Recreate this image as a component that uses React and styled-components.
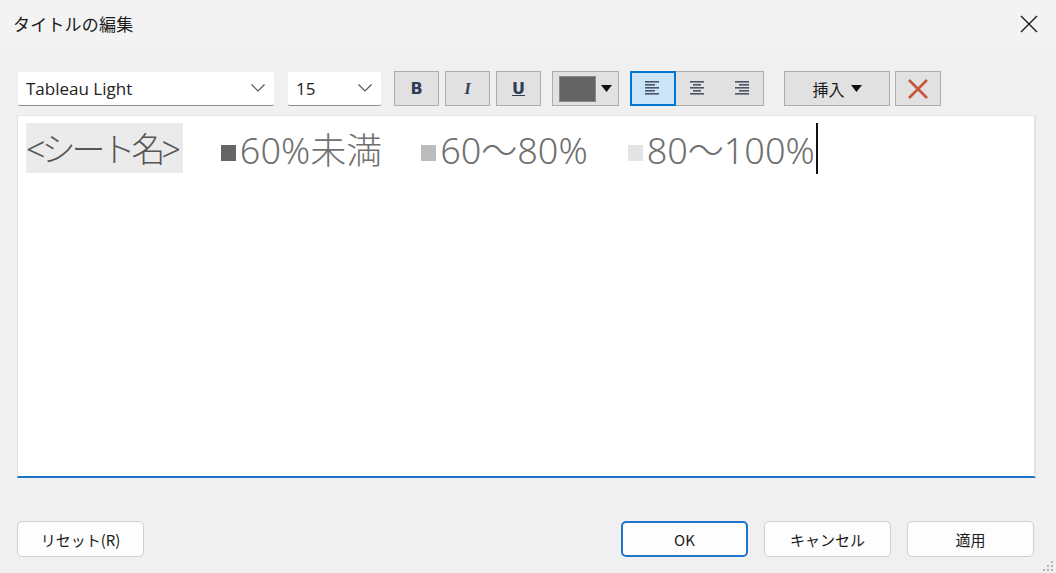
import styled, { createGlobalStyle } from "styled-components";

const GlobalStyle = createGlobalStyle`
  html, body {
    margin: 0;
    padding: 0;
    background: #f0f0f0;
  }
  body {
    font-family: "Noto Sans", "Noto Sans CJK JP", sans-serif;
  }
`;

const Window = styled.div`
  width: 1056px;
  height: 573px;
  display: flex;
  flex-direction: column;
  background: #f0f0f0;
  position: relative;
  overflow: hidden;
`;

const TitleBar = styled.div`
  height: 50px;
  flex: none;
  display: flex;
  align-items: center;
  justify-content: space-between;
  padding: 0 14px 2px 13px;
  box-sizing: border-box;
  background: #f3f3f3;
  border-bottom: 1px solid #ececec;
`;

const Title = styled.div`
  font-family: "Noto Sans CJK JP", sans-serif;
  font-size: 17px;
  color: #1b1b1b;
  letter-spacing: 0.2px;
`;

const CloseButton = styled.div`
  width: 26px;
  height: 26px;
  display: flex;
  align-items: center;
  justify-content: center;
`;

const Body = styled.div`
  flex: 1;
  display: flex;
  flex-direction: column;
  padding: 21px 20px 16px 17px;
`;

const Toolbar = styled.div`
  display: flex;
  align-items: center;
  height: 35px;
`;

const Select = styled.div`
  width: ${(p) => p.$w}px;
  height: 34px;
  margin-left: ${(p) => p.$ml || 0}px;
  box-sizing: border-box;
  background: #fff;
  border-bottom: 1px solid #8f8f8f;
  border-radius: 2px;
  display: flex;
  align-items: center;
  justify-content: space-between;
  padding: 0 8px 0 8px;
  font-family: "Open Sans", sans-serif;
  font-size: 17px;
  color: #222;
`;

const ToolButton = styled.div`
  width: ${(p) => p.$w || 45}px;
  height: 35px;
  margin-left: ${(p) => p.$ml || 0}px;
  box-sizing: border-box;
  background: #e1e1e1;
  border: 1px solid #adadad;
  display: flex;
  align-items: center;
  justify-content: center;
  font-family: "DejaVu Sans", sans-serif;
  font-size: 16px;
  font-weight: bold;
  color: #2f3d55;
`;

const AlignGroup = styled.div`
  display: flex;
  margin-left: 11px;
  border: 1px solid #adadad;
  background: #e1e1e1;
  height: 35px;
  box-sizing: border-box;
`;

const AlignButton = styled.div`
  width: 44px;
  height: 100%;
  box-sizing: border-box;
  display: flex;
  align-items: center;
  justify-content: center;
  background: ${(p) => (p.$active ? "#cce4f7" : "transparent")};
  outline: ${(p) => (p.$active ? "2px solid #0078d4" : "none")};
  outline-offset: -1px;
`;

const Swatch = styled.div`
  width: 37px;
  height: 26px;
  box-sizing: border-box;
  background: #646464;
  border: 1px solid #888;
`;

const InsertLabel = styled.span`
  font-family: "Noto Sans CJK JP", sans-serif;
  font-weight: normal;
  font-size: 16px;
  color: #1c1c1c;
  margin-right: 6px;
`;

const Editor = styled.div`
  margin-top: 9px;
  height: 363px;
  box-sizing: border-box;
  background: #fff;
  border-top: 1px solid #e6e6e6;
  border-left: 1px solid #dedede;
  border-right: 2px solid #dfe5ec;
  border-bottom: 2px solid #1c72c4;
  padding: 7px 0 0 8px;
`;

const Line = styled.div`
  display: flex;
  align-items: center;
  height: 50px;
  font-family: "Noto Sans", "Noto Sans CJK JP", sans-serif;
  font-size: 36px;
  font-weight: 300;
  color: #707070;
`;

const Field = styled.span`
  background: #ebebeb;
  color: #565656;
  height: 50px;
  display: flex;
  align-items: center;
  padding: 0 6px 2px 0;
  box-sizing: border-box;
  font-size: 34px;
  letter-spacing: -4px;
`;

const Legend = styled.span`
  display: flex;
  align-items: center;
  margin-left: ${(p) => p.$ml}px;
`;

const Square = styled.span`
  width: 15px;
  height: 16px;
  margin-top: 9px;
  margin-right: 4px;
  background: ${(p) => p.$c};
`;

const Caret = styled.span`
  width: 2px;
  height: 51px;
  background: #111;
  margin-left: 1px;
`;

const Footer = styled.div`
  margin-top: auto;
  display: flex;
  align-items: center;
  gap: 16px;
  padding-right: 2px;
`;

const DialogButton = styled.div`
  width: 127px;
  height: 36px;
  box-sizing: border-box;
  background: #fdfdfd;
  border: ${(p) => (p.$primary ? "2px solid #1f74c9" : "1px solid #cfcfcf")};
  border-radius: 5px;
  display: flex;
  align-items: center;
  justify-content: center;
  font-family: "Noto Sans CJK JP", sans-serif;
  font-size: 15px;
  color: #1b1b1b;
  margin-left: ${(p) => (p.$push ? "auto" : "0")};
`;

const Grip = styled.svg`
  position: absolute;
  right: 2px;
  bottom: 1px;
`;

const Chevron = () => (
  <svg width="16" height="10" viewBox="0 0 16 10">
    <path d="M1.5 1.5 L8 8 L14.5 1.5" fill="none" stroke="#555" strokeWidth="1.2" />
  </svg>
);

const Caret6 = () => (
  <svg width="11" height="7" viewBox="0 0 11 7">
    <path d="M0 0 H11 L5.5 7 Z" fill="#111" />
  </svg>
);

const AlignIcon = ({ mode }) => {
  const rows = [
    [14, 14, 14],
    [10, 14, 8],
    [14, 14, 14],
    [10, 14, 8],
    [14, 14, 14],
  ];
  return (
    <svg width="18" height="15" viewBox="0 0 18 15">
      {rows.map((r, i) => {
        const w = mode === "left" ? r[0] : mode === "center" ? r[1] - (i % 2 ? 6 : 0) : r[2] + (i % 2 ? 2 : 0);
        const x = mode === "left" ? 1 : mode === "center" ? (18 - w) / 2 : 17 - w;
        return <rect key={i} x={x} y={i * 3} width={w} height="1.6" fill="#4a5668" />;
      })}
    </svg>
  );
};

export default function App() {
  return (
    <>
      <GlobalStyle />
      <Window>
        <TitleBar>
          <Title>タイトルの編集</Title>
          <CloseButton>
            <svg width="20" height="20" viewBox="0 0 20 20">
              <path d="M2 2 L18 18 M18 2 L2 18" stroke="#1a1a1a" strokeWidth="1.4" />
            </svg>
          </CloseButton>
        </TitleBar>
        <Body>
          <Toolbar>
            <Select $w={256} $ml={1}>
              <span>Tableau Light</span>
              <Chevron />
            </Select>
            <Select $w={93} $ml={14}>
              <span>15</span>
              <Chevron />
            </Select>
            <ToolButton $ml={13}>B</ToolButton>
            <ToolButton $ml={6} style={{ fontStyle: "italic", fontFamily: "Liberation Serif" }}>
              I
            </ToolButton>
            <ToolButton $ml={6} style={{ textDecoration: "underline" }}>
              U
            </ToolButton>
            <ToolButton $w={67} $ml={11} style={{ justifyContent: "flex-start", paddingLeft: 6 }}>
              <Swatch />
              <span style={{ marginLeft: 5, display: "flex" }}>
                <Caret6 />
              </span>
            </ToolButton>
            <AlignGroup>
              <AlignButton $active>
                <AlignIcon mode="left" />
              </AlignButton>
              <AlignButton>
                <AlignIcon mode="center" />
              </AlignButton>
              <AlignButton>
                <AlignIcon mode="right" />
              </AlignButton>
            </AlignGroup>
            <ToolButton $w={106} $ml={20}>
              <InsertLabel>挿入</InsertLabel>
              <Caret6 />
            </ToolButton>
            <ToolButton $w={46} $ml={5}>
              <svg width="22" height="22" viewBox="0 0 22 22">
                <path d="M2 2 L20 20 M20 2 L2 20" stroke="#c8553b" strokeWidth="2.6" />
              </svg>
            </ToolButton>
          </Toolbar>
          <Editor>
            <Line>
              <Field>&lt;シート名&gt;</Field>
              <Legend $ml={38}>
                <Square $c="#666666" />
                60%未満
              </Legend>
              <Legend $ml={39}>
                <Square $c="#bcbcbc" />
                60～80%
              </Legend>
              <Legend $ml={40}>
                <Square $c="#e4e4e4" />
                80～100%
              </Legend>
              <Caret />
            </Line>
          </Editor>
          <Footer>
            <DialogButton>リセット(R)</DialogButton>
            <DialogButton $primary $push>
              OK
            </DialogButton>
            <DialogButton>キャンセル</DialogButton>
            <DialogButton>適用</DialogButton>
          </Footer>
        </Body>
        <Grip width="14" height="12" viewBox="0 0 14 12">
          {[
            [11, 1],
            [7, 5],
            [11, 5],
            [3, 9],
            [7, 9],
            [11, 9],
          ].map(([x, y], i) => (
            <rect key={i} x={x} y={y} width="2" height="2" fill="#b5b5b5" />
          ))}
        </Grip>
      </Window>
    </>
  );
}
